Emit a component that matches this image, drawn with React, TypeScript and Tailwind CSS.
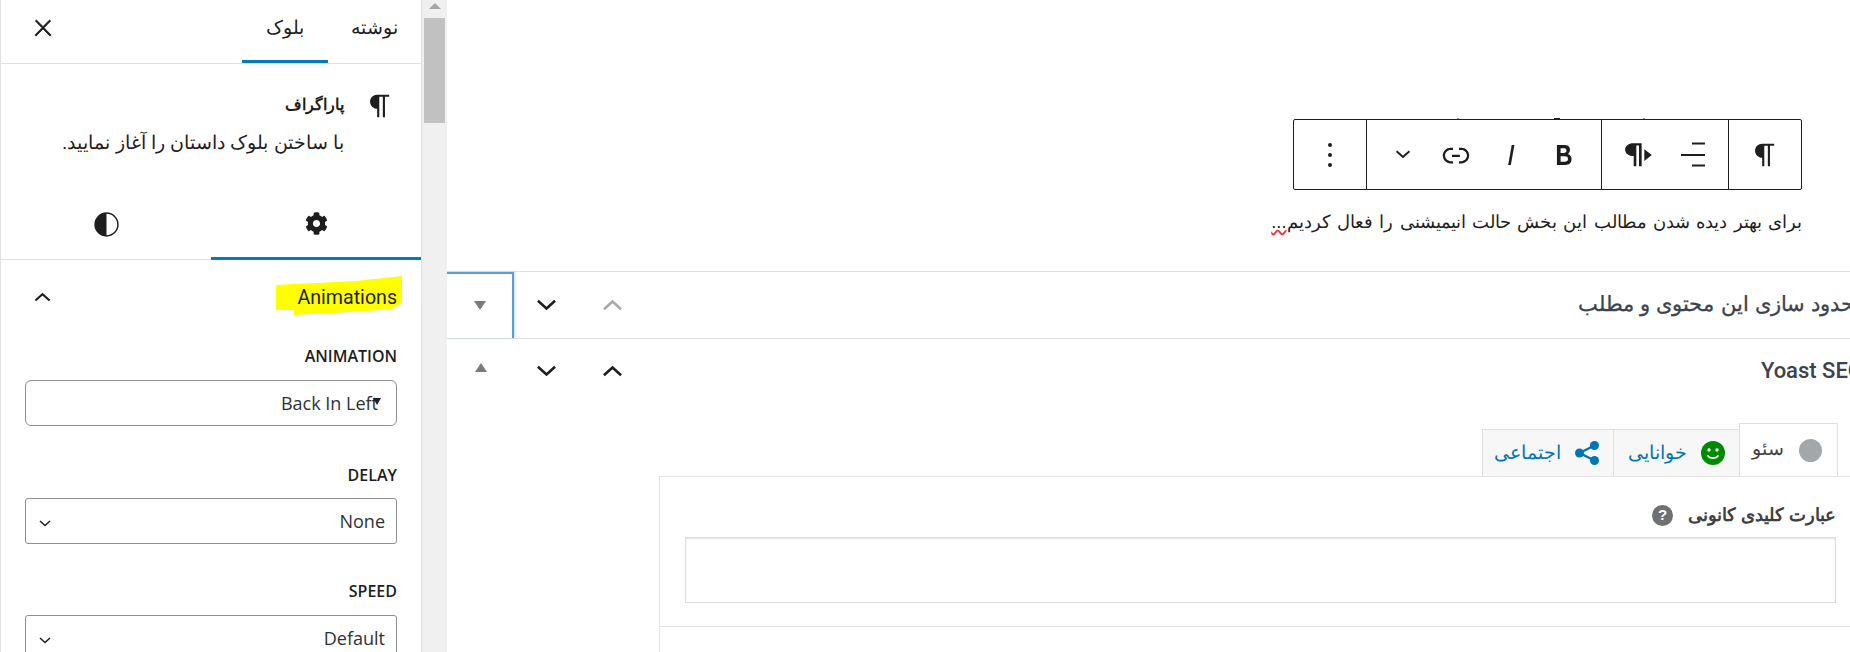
import { FaCog } from "react-icons/fa";

const paragraphPath =
  "m9.99609 14v-.2251l.00391.0001v6.225h1.5v-14.5h2.5v14.5h1.5v-14.5h3v-1.5h-8.50391c-2.76142 0-5 2.23858-5 5 0 2.7614 2.23858 5 5 5z";

function Pilcrow({ className }: { className: string }) {
  return (
    <svg viewBox="0 0 24 24" className={className} fill="currentColor">
      <path d={paragraphPath} />
    </svg>
  );
}

function Chevron({ up, className }: { up?: boolean; className: string }) {
  return (
    <svg viewBox="0 0 24 14" className={className} fill="none" stroke="currentColor" strokeWidth="3">
      <polyline points={up ? "2,12 12,3 22,12" : "2,2 12,11 22,2"} />
    </svg>
  );
}

function SelectBox({ value, rounded, triangle }: { value: string; rounded: string; triangle?: boolean }) {
  return (
    <div className={`relative flex h-[46px] items-center justify-end border border-[#8c8f94] bg-white pr-[11px] text-[18px] text-[#2c3338] ${rounded}`}>
      {!triangle && <Chevron className="absolute left-[13px] top-[21px] h-[7px] w-[12px] text-[#1e1e1e]" />}
      <span className={`font-['Open_Sans',sans-serif] ${triangle ? "mr-[7px]" : ""}`}>{value}</span>
      {triangle && <span className="absolute left-[347px] top-[17px] h-0 w-0 border-x-[4px] border-t-[7px] border-x-transparent border-t-[#222]" />}
    </div>
  );
}

function Label({ children }: { children: string }) {
  return <div className="text-right font-['Open_Sans',sans-serif] text-[16px] font-semibold leading-[24px] text-[#1e1e1e]">{children}</div>;
}

function RowButtons({ first, upMuted, triangleUp }: { first?: boolean; upMuted?: boolean; triangleUp?: boolean }) {
  return (
    <div className="flex h-full">
      <div className={`flex w-[67px] items-center justify-center ${first ? "border-r-2 border-t-2 border-[#5b9dd9] shadow-[1px_0_2px_#5b9dd955]" : ""}`}>
        {triangleUp ? (
          <span className="h-0 w-0 -translate-y-[3px] border-x-[6px] border-b-[9px] border-x-transparent border-b-[#787c82]" />
        ) : (
          <span className="h-0 w-0 -translate-y-[1px] border-x-[6px] border-t-[9px] border-x-transparent border-t-[#787c82]" />
        )}
      </div>
      <div className="flex w-[66px] items-center justify-center pr-[2px]">
        <Chevron className="h-[12px] w-[21px] text-[#1e1e1e]" />
      </div>
      <div className="flex w-[66px] items-center justify-center pr-[2px]">
        <Chevron up className={`h-[12px] w-[21px] ${upMuted ? "text-[#a7aaad]" : "text-[#1e1e1e]"}`} />
      </div>
    </div>
  );
}

function Sidebar() {
  return (
    <aside className="flex h-full w-[422px] shrink-0 flex-col border-x border-[#e0e0e0] bg-white text-[#1e1e1e]">
      <div className="flex h-[64px] shrink-0 justify-between border-b border-[#e0e0e0] pl-[29px]">
        <svg viewBox="0 0 24 24" className="mt-[15px] h-[26px] w-[26px]" fill="currentColor">
          <path d="M13 11.8l6.1-6.3-1-1-6.1 6.2-6.1-6.2-1 1 6.1 6.3-6.5 6.7 1 1 6.5-6.6 6.5 6.6 1-1z" stroke="currentColor" strokeWidth="0.7" />
        </svg>
        <div dir="rtl" className="flex h-full text-[19px]">
          <div className="flex w-[93px] items-center justify-center pb-[6px]">نوشته</div>
          <div className="flex w-[86px] items-center justify-center border-b-[3px] border-[#007cba] pb-[3px]">بلوک</div>
        </div>
      </div>

      <div className="flex h-[126px] shrink-0 justify-end gap-[19px] pr-[24px] pt-[26px]">
        <div dir="rtl" className="flex flex-col gap-[9px] text-right">
          <div className="text-[16px] font-bold leading-[30px]">پاراگراف</div>
          <div className="text-[19px] leading-[28px]">با ساختن بلوک داستان را آغاز نمایید.</div>
        </div>
        <Pilcrow className="-mt-[1px] h-[34px] w-[34px] shrink-0" />
      </div>

      <div className="grid h-[70px] shrink-0 grid-cols-[210px_210px] border-b border-[#e0e0e0]">
        <div className="flex items-center justify-center">
          <svg viewBox="0 0 24 24" className="h-[25px] w-[25px]">
            <circle cx="12" cy="12" r="11" fill="none" stroke="#1e1e1e" strokeWidth="1.4" />
            <path d="M12 1a11 11 0 0 0 0 22z" fill="#1e1e1e" />
          </svg>
        </div>
        <div className="-mb-px flex items-center justify-center border-b-[3px] border-[#007cba]">
          <FaCog className="h-[23px] w-[23px]" />
        </div>
      </div>

      <div className="px-[24px]">
        <div className="relative flex h-[74px] items-center justify-between pl-[9px]">
          <Chevron up className="h-[10px] w-[17px] text-[#1e1e1e]" />
          <svg viewBox="0 0 126 40" className="absolute right-[-5px] top-[16px] h-[40px] w-[126px]" fill="#ffff00">
            <polygon points="0,9 18,8 40,7 80,5 126,0 126,27 116,33 92,35 18,39 18,34 0,34" />
          </svg>
          <span className="relative pt-[1px] font-['Roboto',sans-serif] text-[19.6px] text-[#1e1e1e]">Animations</span>
        </div>
        <div className="mt-[10px]">
          <Label>ANIMATION</Label>
          <div className="mt-[12px]">
            <SelectBox value="Back In Left" rounded="rounded-[6px]" triangle />
          </div>
        </div>
        <div className="mt-[37px]">
          <Label>DELAY</Label>
          <div className="mt-[11px]">
            <SelectBox value="None" rounded="rounded-[3px]" />
          </div>
        </div>
        <div className="mt-[35px]">
          <Label>SPEED</Label>
          <div className="mt-[12px]">
            <SelectBox value="Default" rounded="rounded-[3px]" />
          </div>
        </div>
      </div>
    </aside>
  );
}

function Toolbar() {
  return (
    <div className="relative flex h-[71px] w-[509px] rounded-[2px] border border-[#1e1e1e] bg-white text-[#1e1e1e]">
      {/* bits of the hidden heading that stick out above the toolbar */}
      <span className="absolute left-[163px] top-[-2px] h-[1px] w-[2px] bg-[#999]" />
      <span className="absolute left-[260px] top-[-2px] h-[1px] w-[6px] bg-[#222]" />
      <span className="absolute left-[349px] top-[-2px] h-[1px] w-[2px] bg-[#999]" />
      <div className="flex w-[73px] flex-col items-center justify-center gap-[6px] border-r border-[#1e1e1e]">
        <span className="h-[4px] w-[4px] rounded-full bg-[#1e1e1e]" />
        <span className="h-[4px] w-[4px] rounded-full bg-[#1e1e1e]" />
        <span className="h-[4px] w-[4px] rounded-full bg-[#1e1e1e]" />
      </div>
      <div className="flex w-[235px] items-center border-r border-[#1e1e1e] pl-[28px]">
        <Chevron className="h-[9px] w-[16px]" />
        <svg viewBox="0 0 24 24" className="ml-[27px] h-[36px] w-[36px]" fill="currentColor">
          <path d="M15.6 7.2H14v1.5h1.6c2 0 3.7 1.7 3.7 3.7s-1.7 3.7-3.7 3.7H14v1.5h1.6c2.8 0 5.2-2.3 5.2-5.2 0-2.9-2.3-5.2-5.2-5.2zM4.7 12.4c0-2 1.7-3.7 3.7-3.7H10V7.2H8.4c-2.9 0-5.2 2.3-5.2 5.2 0 2.9 2.3 5.2 5.2 5.2H10v-1.5H8.4c-2 0-3.7-1.7-3.7-3.7zm4.6.9h5.3v-1.5H9.3v1.5z" />
        </svg>
        <svg viewBox="0 0 24 24" className="ml-[20px] h-[34px] w-[34px]" fill="currentColor">
          <path d="M12.5 5L10 19h1.9l2.5-14z" />
        </svg>
        <svg viewBox="0 0 24 24" className="ml-[19px] h-[34px] w-[34px]" fill="currentColor">
          <path d="M14.7 11.3c1-.6 1.5-1.6 1.5-3 0-2.3-1.5-3.3-4.6-3.3H7v14h5.8c1.4 0 2.5-.3 3.3-1 .8-.7 1.2-1.7 1.2-2.9.1-1.9-.8-3.3-2.6-3.8zm-5.1-4h2.3c.6 0 1.1.1 1.4.4.3.3.5.7.5 1.2s-.2 1-.5 1.2c-.3.3-.8.4-1.4.4H9.6V7.3zm4.6 9c-.4.3-1 .4-1.7.4H9.6v-3.9h2.9c.7 0 1.3.2 1.7.5.4.3.6.8.6 1.5s-.2 1.2-.6 1.5z" />
        </svg>
      </div>
      <div className="flex w-[127px] items-center border-r border-[#1e1e1e] pl-[21px]">
        <svg viewBox="0 0 30 24" className="h-[27px] w-[32px]" fill="currentColor">
          <path d="M10 13.5V23h2.5V3.5H15V23h2.5V1.5H9.5C5.5 1.5 2 4 2 7.5s3.5 6 8 6z" />
          <path d="M20 7l7 5.5-7 5.5z" />
        </svg>
        <svg viewBox="0 0 24 24" className="ml-[26px] h-[25px] w-[24px]" fill="currentColor">
          <rect x="11" y="0" width="13" height="2" />
          <rect x="0" y="11.5" width="24" height="2" />
          <rect x="11" y="22" width="13" height="2" />
        </svg>
      </div>
      <div className="flex flex-1 items-center justify-center">
        <Pilcrow className="h-[34px] w-[34px]" />
      </div>
    </div>
  );
}

function YoastPanel() {
  return (
    <div className="mr-[26px] mt-[8px]">
      <div dir="rtl" className="flex h-[53px] items-end pr-[22px] font-['Roboto',sans-serif] text-[19px]">
        <div className="flex h-[53px] w-[99px] items-center gap-[15px] border-x border-t border-[#e0e0e0] bg-white pr-[15px] text-[#444]">
          <span className="h-[23px] w-[23px] rounded-full bg-[#a4a7aa]" />
          <span className="-mt-[2px]">سئو</span>
        </div>
        <div className="flex h-[47px] w-[126px] items-center gap-[14px] border-l border-t border-[#e0e0e0] bg-[#f7f7f7] pr-[14px] text-[#0075b3]">
          <svg viewBox="0 0 24 24" className="h-[24px] w-[24px]">
            <circle cx="12" cy="12" r="12" fill="#008a00" />
            <circle cx="8" cy="9" r="1.7" fill="#fff" />
            <circle cx="16" cy="9" r="1.7" fill="#fff" />
            <path d="M6.5 14.5c2.5 3.5 8.5 3.5 11 0" fill="none" stroke="#fff" strokeWidth="1.6" />
          </svg>
          <span>خوانایی</span>
        </div>
        <div className="flex h-[47px] w-[131px] items-center gap-[14px] border-l border-t border-[#e0e0e0] bg-[#f7f7f7] pr-[14px] text-[#0075b3]">
          <svg viewBox="0 0 24 24" className="h-[24px] w-[24px]" fill="#0075b3">
            <circle cx="19.5" cy="4.5" r="4.5" />
            <circle cx="4.5" cy="12" r="4.5" />
            <circle cx="19.5" cy="19.5" r="4.5" />
            <path d="M4.5 12L19.5 4.5M4.5 12l15 7.5" stroke="#0075b3" strokeWidth="2.4" />
          </svg>
          <span>اجتماعی</span>
        </div>
      </div>
      <div className="ml-[212px] h-[200px] border-l border-t border-[#e5e5e5] bg-white">
        <div className="border-b border-[#e5e5e5] pb-[23px] pl-[25px] pr-[24px] pt-[26px]">
          <div dir="rtl" className="flex h-[24px] items-center gap-[15px] text-[18px] font-bold text-[#404040]">
            <span>عبارت کلیدی کانونی</span>
            <span className="flex h-[21px] w-[21px] items-center justify-center rounded-full bg-[#707070] font-['Liberation_Sans',sans-serif] text-[15px] font-bold text-white">?</span>
          </div>
          <div className="mt-[10px] h-[66px] border border-[#dcdcdc] shadow-[inset_0_1px_2px_#0000001a]" />
        </div>
      </div>
    </div>
  );
}

export default function App() {
  return (
    <div className="flex h-[652px] w-[1850px] overflow-hidden bg-white font-['Liberation_Sans',sans-serif]">
      <Sidebar />
      <div className="relative flex h-full w-[25px] shrink-0 justify-center bg-[#f0f0f0]">
        <span className="absolute top-[3px] h-0 w-0 border-x-[6px] border-b-[6px] border-x-transparent border-b-[#a6a6a6]" />
        <div className="mt-[18px] h-[105px] w-[21px] bg-[#c1c1c1]" />
      </div>
      <main className="w-[1403px] shrink-0">
        <div className="w-[1439px]">
          <div className="flex h-[271px] flex-col items-end pr-[84px] pt-[119px]">
            <Toolbar />
            <p dir="rtl" className="mt-[19px] text-[18.4px] leading-[26px] text-[#1e1e1e] [word-spacing:1.2px]">
              برای بهتر دیده شدن مطالب این بخش حالت انیمیشنی را فعال کردیم
              <span className="underline decoration-red-500 decoration-wavy">...</span>
            </p>
          </div>
          <div className="flex h-[67px] items-center justify-between border-t border-[#e0e0e0] pr-[20px]">
            <RowButtons first upMuted />
            <span dir="rtl" className="font-['Roboto',sans-serif] text-[21px] text-[#3c434a] [-webkit-text-stroke:0.3px_#3c434a] [word-spacing:1px]">
              محدود سازی این محتوی و مطلب
            </span>
          </div>
          <div className="flex h-[77px] items-center justify-between border-t border-[#e0e0e0] pr-[23px] pb-[13px]">
            <RowButtons triangleUp />
            <span className="font-['Roboto',sans-serif] text-[22px] font-medium text-[#3c434a]">Yoast SEO</span>
          </div>
          <YoastPanel />
        </div>
      </main>
    </div>
  );
}
